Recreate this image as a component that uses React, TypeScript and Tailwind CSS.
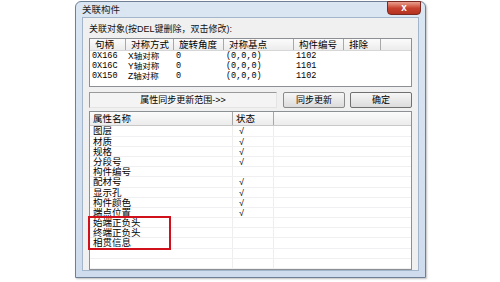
import React from 'react';

const font = { fontFamily: '"Liberation Sans", "Noto Sans CJK SC", sans-serif' };
const mono = { fontFamily: '"Liberation Mono", "Noto Sans CJK SC", monospace' };

interface Link {
  handle: string;
  mode: string;
  angle: string;
  base: string;
  part: string;
}

const links: Link[] = [
  { handle: '0X166', mode: 'X轴对称', angle: '0', base: '(0,0,0)', part: '1102' },
  { handle: '0X16C', mode: 'Y轴对称', angle: '0', base: '(0,0,0)', part: '1101' },
  { handle: '0X150', mode: 'Z轴对称', angle: '0', base: '(0,0,0)', part: '1102' },
];

const props: [string, boolean][] = [
  ['图层', true],
  ['材质', true],
  ['规格', true],
  ['分段号', true],
  ['构件编号', false],
  ['配材号', true],
  ['显示孔', true],
  ['构件颜色', true],
  ['端点位置', true],
  ['始端正负头', false],
  ['终端正负头', false],
  ['相贯信息', false],
  ['', false],
  ['', false],
];

const topCols = [
  { label: '句柄', w: 'w-[36px]' },
  { label: '对称方式', w: 'w-[48px]' },
  { label: '旋转角度', w: 'w-[50px]' },
  { label: '对称基点', w: 'w-[70px]' },
  { label: '构件编号', w: 'w-[50px]' },
  { label: '排除', w: 'w-[37px]' },
];

const App: React.FC = () => {
  return (
    <div className="w-[500px] h-[282px] bg-white overflow-hidden text-black" style={font}>
      <div className="relative ml-[75px] mt-[1px] w-[351px] h-[277px] border border-[#6f8096] rounded-t-[6px] bg-gradient-to-b from-[#dbe6f3] to-[#cfdced] flex flex-col px-[6px] pb-[6px] shadow-[1px_1px_2px_rgba(0,0,0,0.25)]">
        {/* title */}
        <div className="h-[20px] flex items-center text-[9.5px] text-[#1a1a1a]">关联构件</div>
        <div className="absolute right-[4px] top-[-1px] w-[34px] h-[14px] rounded-b-[4px] border border-[#7a2a20] bg-gradient-to-b from-[#e8a090] via-[#c8432f] to-[#b43220] flex items-center justify-center text-white text-[10px] font-bold leading-none">
          x
        </div>

        {/* client area */}
        <div className="flex-1 bg-[#f0f0f0] border border-[#a3b5cb] pl-[6px] pr-[6px] pt-[5px] flex flex-col">
          <div className="h-[13px] leading-[13px] text-[9px] text-[#111]">关联对象(按DEL键删除，双击修改):</div>

          {/* top list */}
          <div className="mt-[2px] h-[49px] bg-white border border-[#8c8f94] flex flex-col">
            <div className="h-[12px] flex bg-gradient-to-b from-[#fbfbfb] to-[#ececec] border-b border-[#d6d6d6] text-[9.5px] leading-[11px]">
              {topCols.map(c => (
                <div key={c.label} className={`${c.w} border-r border-[#a8a8a8] pl-[5px]`}>
                  {c.label}
                </div>
              ))}
            </div>
            {links.map(l => (
              <div key={l.handle} className="h-[10px] flex text-[8.5px] leading-[10px]">
                <div className="w-[36px] pl-[2px]" style={mono}>{l.handle}</div>
                <div className="w-[48px] pl-[2px]">{l.mode}</div>
                <div className="w-[50px] pl-[2px]" style={mono}>{l.angle}</div>
                <div className="w-[70px] pl-[2px]" style={mono}>{l.base}</div>
                <div className="w-[50px] pl-[2px]" style={mono}>{l.part}</div>
              </div>
            ))}
          </div>

          {/* buttons */}
          <div className="mt-[5px] h-[16px] flex">
            <div className="w-[188px] border-t border-l border-[#9a9a9a] border-r border-b border-r-[#e4e4e4] border-b-[#e4e4e4] bg-[#f4f4f4] flex items-center justify-center text-[9px]">
              属性同步更新范围-&gt;&gt;
            </div>
            <div className="ml-[6px] w-[62px] border border-[#8a8a8a] rounded-[2px] bg-gradient-to-b from-[#f6f6f6] to-[#dcdcdc] flex items-center justify-center text-[9px]">
              同步更新
            </div>
            <div className="ml-[5px] w-[62px] border border-[#707070] rounded-[2px] bg-gradient-to-b from-[#f6f6f6] to-[#dcdcdc] flex items-center justify-center text-[9px]">
              确定
            </div>
          </div>

          {/* properties list */}
          <div className="relative mt-[3px] flex-1 bg-white border border-[#8c8f94] flex flex-col">
            <div className="h-[14px] flex bg-gradient-to-b from-[#fbfbfb] to-[#ececec] border-b border-[#c8c8c8] text-[9.5px] leading-[13px]">
              <div className="w-[143px] border-r border-[#a8a8a8] pl-[3px]">属性名称</div>
              <div className="w-[41px] border-r border-[#a8a8a8] pl-[3px]">状态</div>
            </div>
            {props.map(([name, on], i) => (
              <div key={i} className="h-[10.2px] flex border-b border-[#f0f0f2] text-[9.5px] leading-[10px]">
                <div className="w-[143px] border-r border-[#eeeeee] pl-[3px]">{name}</div>
                <div className="w-[41px] border-r border-[#eeeeee] pl-[6px] text-[9px] italic">{on ? '√' : ''}</div>
              </div>
            ))}
            <div className="absolute left-[-2px] top-[104px] w-[83px] h-[34px] border-[2.5px] border-[#d0101a]" />
          </div>
        </div>
      </div>
    </div>
  );
};

export default App;
